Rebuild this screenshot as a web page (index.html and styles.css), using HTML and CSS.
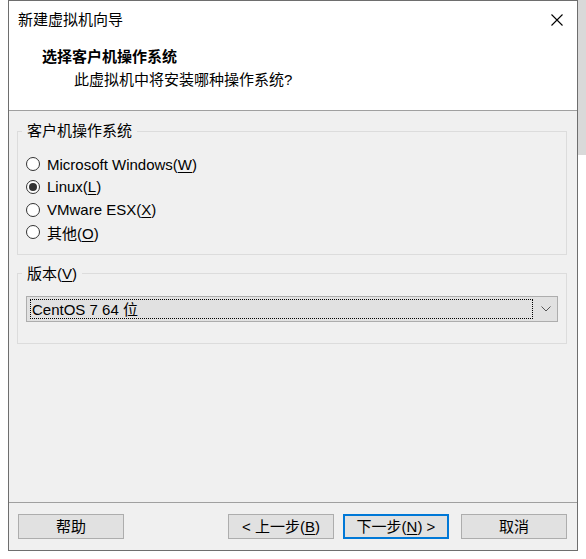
FILE: index.html
```html
<!DOCTYPE html>
<html lang="zh-CN">
<head>
<meta charset="utf-8">
<title>新建虚拟机向导</title>
<link rel="stylesheet" href="styles.css">
</head>
<body>
<div class="page">
  <div class="window">
    <div class="header">
      <div class="titlebar">
        <span class="title">新建虚拟机向导</span>
        <svg class="close" width="12" height="12" viewBox="0 0 12 12"><path d="M0.5 0.5 L11.5 11.5 M11.5 0.5 L0.5 11.5" stroke="#000" stroke-width="1.1" fill="none"/></svg>
      </div>
      <div class="heading">选择客户机操作系统</div>
      <div class="subheading">此虚拟机中将安装哪种操作系统?</div>
    </div>
    <div class="body">
      <fieldset class="group group-os">
        <legend>客户机操作系统</legend>
        <label class="radio-row"><span class="radio"></span><span>Microsoft Windows(<u>W</u>)</span></label>
        <label class="radio-row"><span class="radio checked"></span><span>Linux(<u>L</u>)</span></label>
        <label class="radio-row"><span class="radio"></span><span>VMware ESX(<u>X</u>)</span></label>
        <label class="radio-row"><span class="radio"></span><span>其他(<u>O</u>)</span></label>
      </fieldset>
      <fieldset class="group group-ver">
        <legend>版本(<u>V</u>)</legend>
        <div class="select">
          <div class="select-value"><span>CentOS 7 64 位</span></div>
          <div class="select-arrow">
            <svg width="10" height="6" viewBox="0 0 10 6"><path d="M0.5 0.5 L5 5 L9.5 0.5" stroke="#555" stroke-width="1" fill="none"/></svg>
          </div>
        </div>
      </fieldset>
    </div>
    <div class="footer">
      <button class="btn">帮助</button>
      <div class="spacer"></div>
      <button class="btn">&lt; 上一步(<u>B</u>)</button>
      <button class="btn primary">下一步(<u>N</u>) &gt;</button>
      <button class="btn cancel">取消</button>
    </div>
  </div>
  <div class="strip"></div>
</div>
</body>
</html>
```

FILE: styles.css
```css
* { box-sizing: border-box; }
html, body { margin: 0; padding: 0; background: #fff; }
body {
  font-family: "Liberation Sans", "Noto Sans CJK SC", sans-serif;
  font-size: 15px;
  color: #000;
}
.page {
  display: flex;
  align-items: flex-start;
  padding-left: 8px;
}
.window {
  width: 570px;
  height: 551px;
  border: 1px solid #6e6e6e;
  display: flex;
  flex-direction: column;
  background: #f0f0f0;
}
.strip {
  width: 8px;
  height: 155px;
  background: #d9d9d9;
}
.header {
  height: 110px;
  background: #fff;
  border-bottom: 1px solid #a0a0a0;
  flex: none;
}
.titlebar {
  height: 38px;
  display: flex;
  align-items: center;
  justify-content: space-between;
  padding: 0 14px 0 9px;
}
.title { line-height: 20px; }
.close { display: block; }
.heading {
  font-weight: bold;
  margin-left: 33px;
  line-height: 20px;
  margin-top: 8px;
}
.subheading {
  margin-left: 65px;
  line-height: 20px;
  margin-top: 3px;
}
.body {
  flex: 1;
  padding: 10px 10px 0 8px;
  border-bottom: 1px solid #a0a0a0;
}
.group {
  margin: 0;
  border: 1px solid #dcdcdc;
  padding: 0 8px;
  min-width: 0;
}
.group legend {
  padding: 0 5px;
  margin-left: -4px;
  line-height: 20px;
}
.group-os { padding-top: 12px; padding-bottom: 10px; }
.group-ver { margin-top: 9px; padding-top: 12px; padding-bottom: 21px; }
.radio-row {
  display: flex;
  align-items: center;
  height: 22.67px;
  gap: 7px;
}
.radio {
  width: 14px;
  height: 14px;
  border: 1px solid #333;
  border-radius: 50%;
  background: #fff;
  display: flex;
  align-items: center;
  justify-content: center;
  flex: none;
}
.radio.checked::after {
  content: "";
  width: 8px;
  height: 8px;
  border-radius: 50%;
  background: #333;
}
.select {
  height: 26px;
  border: 1px solid #adadad;
  background: #e1e1e1;
  display: flex;
  padding: 2px 0 2px 3px;
}
.select-value {
  width: 503px;
  border: 1px dotted #000;
  display: flex;
  align-items: center;
  padding: 2px 0 0 1px;
  line-height: 18px;
}
.select-arrow {
  flex: 1;
  display: flex;
  align-items: center;
  justify-content: center;
  padding-left: 2px;
}
.select-arrow svg { display: block; }
.footer {
  flex: none;
  height: 47px;
  display: flex;
  align-items: center;
  padding: 0 10px 0 9px;
}
.spacer { flex: 1; }
.btn {
  width: 106px;
  height: 25px;
  border: 1px solid #adadad;
  background: #e1e1e1;
  font: inherit;
  color: #000;
  padding: 0;
  margin: 0;
  line-height: 20px;
}
.btn.primary {
  border: 2px solid #0078d7;
  margin-left: 9px;
}
.btn.cancel { margin-left: 12px; }
u { text-decoration-thickness: 1px; text-underline-offset: 2px; }
```
